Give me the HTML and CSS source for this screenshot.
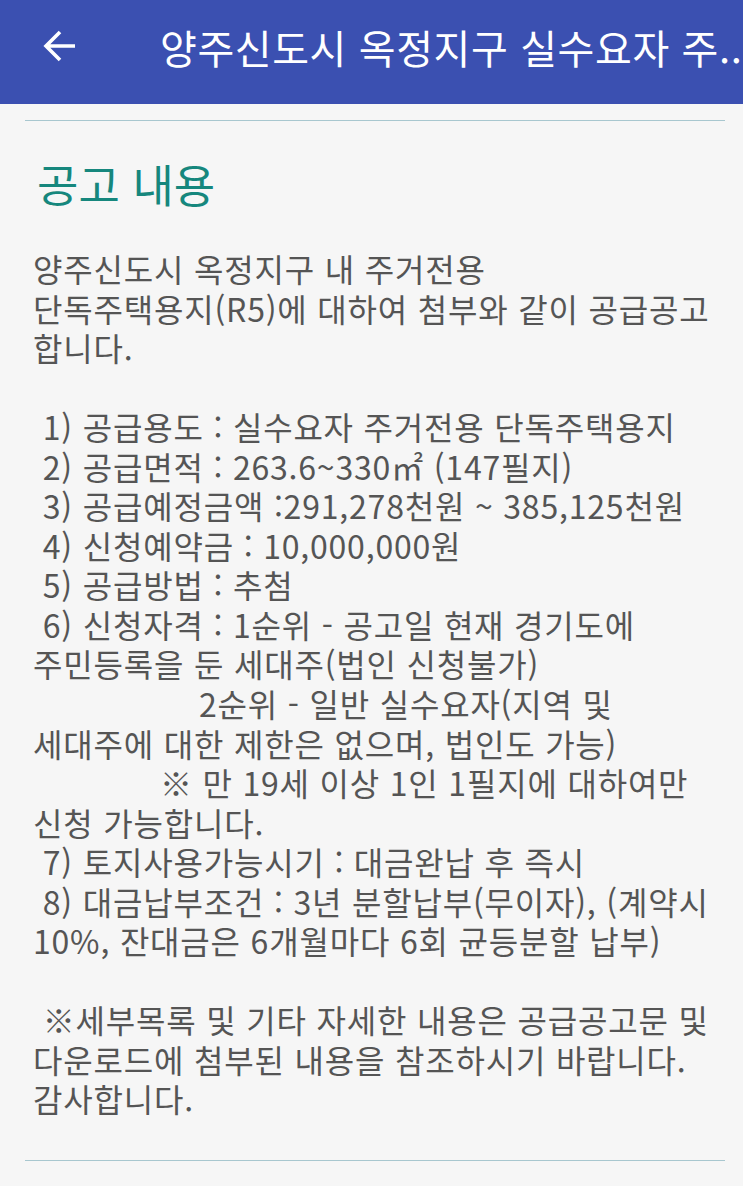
FILE: index.html
```html
<!DOCTYPE html>
<html lang="ko">
<head>
<meta charset="utf-8">
<link rel="stylesheet" href="styles.css">
</head>
<body>
<header class="appbar">
  <svg class="back" viewBox="0 0 34 34" width="34" height="34"><path d="M33 17H4M18 3L4 17l14 14" fill="none" stroke="#fff" stroke-width="3.6"/></svg>
  <div class="title">양주신도시 옥정지구 실수요자 주..</div>
</header>
<main class="content">
  <hr class="rule">
  <h1 class="heading">공고 내용</h1>
  <div class="body">양주신도시 옥정지구 내 주거전용
단독주택용지(R5)에 대하여 첨부와 같이 공급공고
합니다.

 1) 공급용도 : 실수요자 주거전용 단독주택용지
 2) 공급면적 : 263.6~330㎡ (147필지)
 3) 공급예정금액 :291,278천원 ~ 385,125천원
 4) 신청예약금 : 10,000,000원
 5) 공급방법 : 추첨
 6) 신청자격 : 1순위 - 공고일 현재 경기도에
주민등록을 둔 세대주(법인 신청불가)
                 2순위 - 일반 실수요자(지역 및
세대주에 대한 제한은 없으며, 법인도 가능)
             ※ 만 19세 이상 1인 1필지에 대하여만
신청 가능합니다.
 7) 토지사용가능시기 : 대금완납 후 즉시
 8) 대금납부조건 : 3년 분할납부(무이자), (계약시
10%, 잔대금은 6개월마다 6회 균등분할 납부)

 ※세부목록 및 기타 자세한 내용은 공급공고문 및
다운로드에 첨부된 내용을 참조하시기 바랍니다.
감사합니다.</div>
  <hr class="rule rule-bottom">
</main>
</body>
</html>
```
FILE: styles.css
```css
html, body {
  margin: 0;
  padding: 0;
}
body {
  background: #f6f6f6;
  font-family: "Noto Sans CJK KR", "Noto Sans", sans-serif;
  width: 743px;
  height: 1186px;
  overflow: hidden;
}
.appbar {
  height: 104px;
  background: #3b50b1;
  display: flex;
  align-items: center;
  box-sizing: border-box;
  padding-left: 42px;
}
.back {
  flex: none;
  margin-top: -12px;
}
.title {
  color: #fff;
  font-size: 40px;
  margin-left: 84px;
  margin-top: -10px;
  white-space: nowrap;
  overflow: hidden;
  letter-spacing: 0.6px;
}
.content {
  padding: 0 18px 0 25px;
}
.rule {
  margin: 16px 0 0 0;
  border: 0;
  height: 1px;
  background: #a8c7cf;
}
.heading {
  margin: 33px 0 0 12px;
  font-size: 45px;
  font-weight: 400;
  color: #16877d;
  line-height: 60px;
}
.body {
  margin: 35px 0 0 8px;
  white-space: pre;
  font-size: 32px;
  line-height: 39.55px;
  letter-spacing: 0.8px;
  color: #555;
}
.rule-bottom {
  margin-top: 41px;
}
```
